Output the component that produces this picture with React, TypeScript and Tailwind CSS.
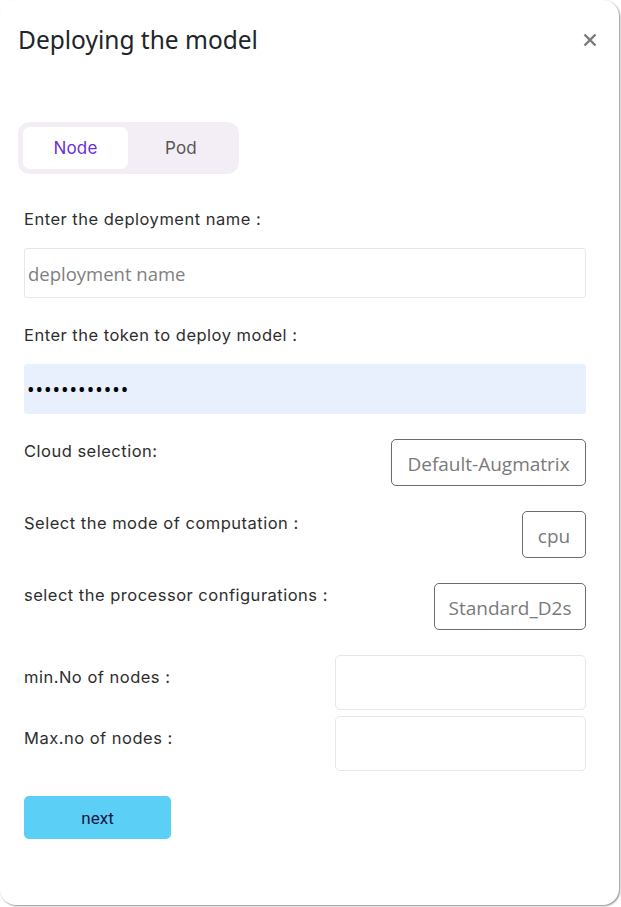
import React, { useState } from 'react';

const Label = ({ children, className = '' }: { children: React.ReactNode; className?: string }) => (
  <span className={`text-[16.5px] leading-[24px] tracking-[0.03em] text-[#2e2e2e] font-['Inter',sans-serif] ${className}`}>
    {children}
  </span>
);

const SelectBox = ({ value, width }: { value: string; width: string }) => (
  <div
    className={`${width} h-[47px] pt-[3px] border border-[#6b6b6b] rounded-[5px] flex items-center justify-center text-[19px] text-[#7a7a7a] font-['Open_Sans',sans-serif]`}
  >
    {value}
  </div>
);

const App: React.FC = () => {
  const [tab, setTab] = useState<'node' | 'pod'>('node');

  return (
    <div className="w-[621px] h-[907px] bg-white">
      <div className="w-[619px] h-[905px] bg-white rounded-[16px] shadow-[1px_1px_2px_rgba(0,0,0,0.45)] flex flex-col">
        {/* Header */}
        <div className="flex items-center justify-between pt-[24px] pl-[18px] pr-[22px]">
          <h2 className="text-[24.5px] leading-[32px] text-[#212529] font-['Noto_Sans',sans-serif]">Deploying the model</h2>
          <button className="text-[#7a7a7a]">
            <svg width="14" height="14" viewBox="0 0 14 14" fill="none" stroke="currentColor" strokeWidth="2.4">
              <path d="M1.5 1.5 L12.5 12.5 M12.5 1.5 L1.5 12.5" />
            </svg>
          </button>
        </div>

        {/* Tabs */}
        <div className="ml-[18px] mt-[66px] w-fit p-[5px] rounded-[12px] bg-[#f3eef5] flex font-['Inter',sans-serif] text-[17px] tracking-[0.01em]">
          <button
            onClick={() => setTab('node')}
            className={`w-[105px] h-[42px] pt-[2px] rounded-[7px] ${tab === 'node' ? 'bg-white text-[#6b2fd6]' : 'text-[#555]'}`}
          >
            Node
          </button>
          <button
            onClick={() => setTab('pod')}
            className={`w-[106px] h-[42px] pt-[2px] rounded-[7px] ${tab === 'pod' ? 'bg-white text-[#6b2fd6]' : 'text-[#555]'}`}
          >
            Pod
          </button>
        </div>

        <div className="px-[24px] pr-[33px] flex flex-col">
          <Label className="mt-[33px]">Enter the deployment name :</Label>
          <input
            placeholder="deployment name"
            className="mt-[17px] h-[50px] w-full border border-[#e6e6ee] rounded-[3px] px-[3px] text-[18.5px] font-['Open_Sans',sans-serif] placeholder:text-[#808080] outline-none"
          />

          <Label className="mt-[25px]">Enter the token to deploy model :</Label>
          <input
            type="password"
            defaultValue="abcdefghijkl"
            className="mt-[17px] h-[50px] w-full bg-[#e8f0fe] rounded-[3px] px-[3px] text-[20px] tracking-[0.05em] text-black outline-none"
          />

          <div className="mt-[25px] flex justify-between items-start">
            <Label>Cloud selection:</Label>
            <SelectBox value="Default-Augmatrix" width="w-[195px]" />
          </div>

          <div className="mt-[25px] flex justify-between items-start">
            <Label>Select the mode of computation :</Label>
            <SelectBox value="cpu" width="w-[64px]" />
          </div>

          <div className="mt-[25px] flex justify-between items-start">
            <Label>select the processor configurations :</Label>
            <SelectBox value="Standard_D2s" width="w-[152px]" />
          </div>

          <div className="mt-[25px] flex justify-between items-start">
            <Label className="mt-[10px]">min.No of nodes :</Label>
            <input className="w-[251px] h-[55px] border border-[#e6e6ee] rounded-[5px] outline-none" />
          </div>

          <div className="mt-[6px] flex justify-between items-start">
            <Label className="mt-[10px]">Max.no of nodes :</Label>
            <input className="w-[251px] h-[55px] border border-[#e6e6ee] rounded-[5px] outline-none" />
          </div>

          <button className="mt-[25px] w-[147px] h-[43px] pt-[3px] rounded-[5px] bg-[#5bcff6] text-[#16163f] text-[17px] font-['Roboto',sans-serif]">
            next
          </button>
        </div>
      </div>
    </div>
  );
};

export default App;
